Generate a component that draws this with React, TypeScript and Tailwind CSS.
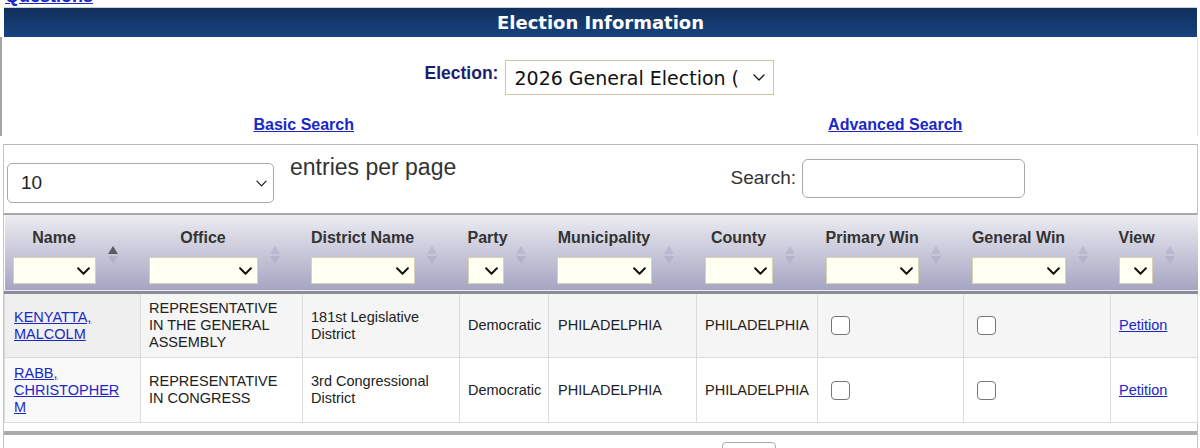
import React from "react";

const arial = "font-['Liberation_Sans',Arial,sans-serif]";
const verdana = "font-['DejaVu_Sans',Verdana,sans-serif]";

const columns = [
  { label: "Name", w: "w-[136px]", sorted: true },
  { label: "Office", w: "w-[162px]" },
  { label: "District Name", w: "w-[157px]" },
  { label: "Party", w: "w-[89px]" },
  { label: "Municipality", w: "w-[148px]" },
  { label: "County", w: "w-[121px]" },
  { label: "Primary Win", w: "w-[146px]" },
  { label: "General Win", w: "w-[147px]" },
  { label: "View", w: "w-[87px]" },
];

const rows = [
  {
    name: ["KENYATTA,", "MALCOLM"],
    office: ["REPRESENTATIVE", "IN THE GENERAL", "ASSEMBLY"],
    district: ["181st Legislative", "District"],
  },
  {
    name: ["RABB,", "CHRISTOPHER", "M"],
    office: ["REPRESENTATIVE", "IN CONGRESS"],
    district: ["3rd Congressional", "District"],
  },
];

function Chevron({ className, stroke = 1.6 }: { className?: string; stroke?: number }) {
  return (
    <svg viewBox="0 0 12 7" className={className} fill="none">
      <polyline points="1,1 6,6 11,1" stroke="#111" strokeWidth={stroke} strokeLinecap="round" strokeLinejoin="round" />
    </svg>
  );
}

function SortArrows({ active }: { active?: boolean }) {
  return (
    <svg viewBox="0 0 10 19" className="absolute right-[23px] top-[31px] w-[10px] h-[19px]">
      <polygon points="5,0 10,8 0,8" fill={active ? "#5a5a62" : "#b9b8cf"} />
      <polygon points="0,10 10,10 5,18" fill="#b4b3cb" />
    </svg>
  );
}

function Checkbox() {
  return <div className="w-[19px] h-[19px] rounded-[4px] border-[1.5px] border-[#767676] bg-white" />;
}

export default function App() {
  return (
    <div className={`w-[1200px] h-[448px] overflow-hidden bg-white ${arial}`}>
      {/* clipped link from the section above */}
      <a className="block -mt-[13px] h-[18px] pl-[5px] text-[18px] leading-[18px] font-bold text-[#1a28c8] underline">
        Questions
      </a>

      <div className="ml-[4px] mt-[2px] w-[1193px] h-[30px] border-t border-[#c9d1de] bg-linear-to-b from-[#11305c] to-[#164380] flex items-center justify-center">
        <span className={`${verdana} text-[18px] font-bold text-white leading-[22px]`}>Election Information</span>
      </div>

      <div className="w-[1198px] h-[99px] border-l-2 border-l-[#a5a5a5] border-r border-r-[#dde1e8]">
        <div className="flex justify-center items-start pt-[23px] gap-[7px]">
          <span className="mt-[3px] text-[17.5px] leading-[20px] font-bold text-[#1c1f6c]">Election:</span>
          <div className="w-[269px] h-[35px] border border-[#cfc6aa] bg-white flex items-center pl-[8px] pr-[5px]">
            <span className={`${verdana} w-[226px] overflow-hidden whitespace-nowrap text-[19px] leading-[22px] text-[#111]`}>
              2026 General Election (2026)
            </span>
            <Chevron className="ml-auto mr-[3px] w-[12px] h-[7px]" stroke={1.3} />
          </div>
        </div>
        <div className="grid grid-cols-2 mt-[20px] text-[16px] leading-[19px] font-bold">
          <div className="text-center pl-[6px]">
            <a className="text-[#1a28c8] underline">Basic Search</a>
          </div>
          <div className="text-center pr-[6px]">
            <a className="text-[#1a28c8] underline">Advanced Search</a>
          </div>
        </div>
      </div>

      <div className="ml-[3px] mt-[8px] w-[1195px] border-l border-r border-[#c4c4c4]">
        <div className="h-[71px] border-t border-t-[#b8b8b8] border-b-2 border-b-[#a8a8a8] flex justify-between">
          <div className="flex items-start pl-[3px]">
            <div className="mt-[18px] w-[267px] h-[40px] rounded-[5px] border border-[#a9a9a9] bg-white flex items-center pl-[13px] pr-[6px]">
              <span className="text-[19px] text-[#222]">10</span>
              <Chevron className="ml-auto w-[11px] h-[7px]" stroke={1.2} />
            </div>
            <span className="ml-[16px] mt-[9px] text-[23px] leading-[26px] text-[#333]">entries per page</span>
          </div>
          <div className="flex items-start pr-[172px]">
            <span className="mt-[22px] mr-[6px] text-[19px] leading-[22px] text-[#333]">Search:</span>
            <div className="mt-[14px] w-[223px] h-[39px] rounded-[6px] border border-[#a9a9a9] bg-white" />
          </div>
        </div>

        <table className="w-full table-fixed border-collapse">
          <colgroup>
            {columns.map((c) => (
              <col key={c.label} className={c.w} />
            ))}
          </colgroup>
          <thead>
            <tr className="bg-linear-to-b from-[#ececf1] to-[#a6a5c2] border-b-[3px] border-b-[#8b8b99]">
              {columns.map((c) => (
                <th key={c.label} className="relative p-0 pl-[8px] pr-[45px] pt-[13px] pb-[7px] align-top">
                  <div className="text-center whitespace-nowrap text-[16px] leading-[19px] font-bold text-[#333]">{c.label}</div>
                  <div className="mt-[10px] h-[27px] bg-[#fffff2] border border-[#d8d1b6] flex items-center justify-end pr-[5px]">
                    <Chevron className="w-[13px] h-[8px]" stroke={1.8} />
                  </div>
                  <SortArrows active={c.sorted} />
                </th>
              ))}
            </tr>
          </thead>
          <tbody className="text-[14.5px] leading-[17px] text-[#222]">
            {rows.map((r, i) => {
              const bg = i === 0 ? "bg-[#f5f5f5]" : "bg-white";
              const nameBg = i === 0 ? "bg-[#efefef]" : "bg-[#f9f9f9]";
              const cell = `border border-[#dcdcdc] h-[65px] align-middle pl-[8px] pr-[4px] ${bg}`;
              return (
                <tr key={i} className={i === 1 ? "border-b border-b-[#b5b5b5]" : ""}>
                  <td className={`border border-[#dcdcdc] h-[65px] align-middle pl-[9px] pr-[4px] ${nameBg}`}>
                    <a className="text-[#1a28c8] underline">
                      {r.name.map((n, k) => (
                        <span key={k} className="block">{n}</span>
                      ))}
                    </a>
                  </td>
                  <td className={cell}>
                    {r.office.map((n, k) => (
                      <div key={k}>{n}</div>
                    ))}
                  </td>
                  <td className={cell}>
                    {r.district.map((n, k) => (
                      <div key={k}>{n}</div>
                    ))}
                  </td>
                  <td className={`${cell} pl-[7px]`}>Democratic</td>
                  <td className={`${cell} pl-[9px]`}>PHILADELPHIA</td>
                  <td className={`${cell} pl-[7px]`}>PHILADELPHIA</td>
                  <td className={`${cell} pl-[13px]`}>
                    <Checkbox />
                  </td>
                  <td className={`${cell} pl-[13px]`}>
                    <Checkbox />
                  </td>
                  <td className={`${cell} pl-[7px]`}>
                    <a className="text-[#1a28c8] underline">Petition</a>
                  </td>
                </tr>
              );
            })}
          </tbody>
        </table>

        <div className="h-[8px]" />
        <div className="h-[4px] bg-[#ababab]" />
        <div className="h-[30px] pl-[718px] pt-[7px]">
          <div className="w-[54px] h-[24px] rounded-[4px] border border-[#a9a9a9] bg-white" />
        </div>
      </div>
    </div>
  );
}
